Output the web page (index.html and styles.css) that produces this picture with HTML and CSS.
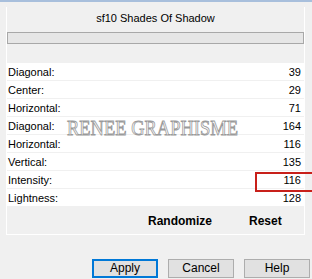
FILE: index.html
```html
<!DOCTYPE html>
<html>
<head>
<meta charset="utf-8">
<link rel="stylesheet" href="styles.css">
</head>
<body>
<div class="window">
  <div class="strip"></div>
  <div class="panel">
    <div class="title">sf10 Shades Of Shadow</div>
    <div class="progress"></div>
    <div class="rows">
      <div class="row"><span>Diagonal:</span><span>39</span></div>
      <div class="row"><span>Center:</span><span>29</span></div>
      <div class="row"><span>Horizontal:</span><span>71</span></div>
      <div class="row"><span>Diagonal:</span><span>164</span></div>
      <div class="row"><span>Horizontal:</span><span>116</span></div>
      <div class="row"><span>Vertical:</span><span>135</span></div>
      <div class="row"><span>Intensity:</span><span>116</span></div>
      <div class="row"><span>Lightness:</span><span>128</span></div>
    </div>
    <div class="actions">
      <span class="randomize">Randomize</span>
      <span class="reset">Reset</span>
    </div>
  </div>
  <div class="buttons">
    <div class="btn default">Apply</div>
    <div class="btn">Cancel</div>
    <div class="btn">Help</div>
  </div>
  <div class="watermark">RENEE GRAPHISME</div>
  <div class="highlight"></div>
</div>
</body>
</html>
```
FILE: styles.css
```css
html, body {
  margin: 0;
  padding: 0;
  background: #f0f0f0;
}
.window {
  position: relative;
  width: 312px;
  height: 279px;
  overflow: hidden;
  background: #f0f0f0;
  font-family: "Liberation Sans", Arial, sans-serif;
  color: #000;
}
.strip {
  height: 2px;
  background: #a8bfdc;
}
.panel {
  margin: 5px 7px 0 6px;
  border-left: 1px solid #ffffff;
  border-right: 1px solid #ffffff;
  border-bottom: 1px solid #ffffff;
  height: 227px;
  display: flex;
  flex-direction: column;
}
.title {
  height: 23px;
  line-height: 23px;
  font-size: 11px;
  text-align: center;
}
.progress {
  margin-top: 2px;
  height: 10px;
  border: 1px solid #a8a8a8;
  background: #e6e6e6;
}
.rows {
  margin-top: 19px;
  display: flex;
  flex-direction: column;
  gap: 1px;
}
.row {
  height: 17px;
  background: #ffffff;
  display: flex;
  justify-content: space-between;
  align-items: center;
  font-size: 11px;
  padding: 0 3px 0 1px;
}
.actions {
  margin-top: 1px;
  flex: 1;
  display: flex;
  align-items: center;
  font-weight: bold;
  font-size: 12px;
}
.randomize {
  margin-left: 141px;
}
.reset {
  margin-left: 37px;
}
.buttons {
  display: flex;
  gap: 10px;
  margin: 24px 0 0 92px;
}
.btn {
  width: 64px;
  height: 17px;
  border: 1px solid #adadad;
  background: #e1e1e1;
  font-size: 12px;
  line-height: 17px;
  text-align: center;
}
.btn.default {
  border: 2px solid #0078d7;
  width: 62px;
  height: 15px;
  line-height: 15px;
}
.watermark {
  position: absolute;
  left: 67px;
  top: 116px;
  font-family: "Liberation Serif", "Times New Roman", serif;
  font-size: 22px;
  line-height: 24px;
  color: #ffffff;
  -webkit-text-stroke: 0.9px #9a9a9a;
  transform: scaleX(0.84);
  transform-origin: left top;
  white-space: nowrap;
}
.highlight {
  position: absolute;
  left: 255px;
  top: 172px;
  width: 60px;
  height: 16px;
  border: 2px solid #c8201a;
}
```
